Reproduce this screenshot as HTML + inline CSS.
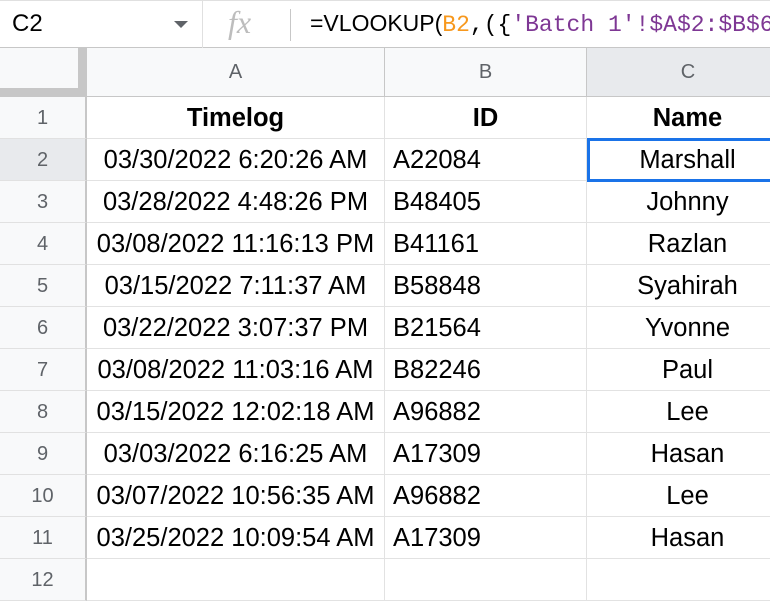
<!DOCTYPE html>
<html><head><style>
body{margin:0;width:770px;height:577px;overflow:hidden;background:#fff;font-family:"Liberation Sans",Arial,sans-serif;position:relative}
.top{position:absolute;left:0;top:0;width:770px;height:48px;border-top:1px solid #e0e0e0;border-bottom:1px solid #c7c7c7;box-sizing:border-box}
.abs{position:absolute}
.hdr{position:absolute;top:48px;height:49px;background:#f8f9fa;border-bottom:1px solid #c7c7c7;box-sizing:border-box;color:#5f6368;font-size:20px;text-align:center;line-height:48px}
.rn{position:absolute;left:0;width:87px;background:#f8f9fa;color:#5f6368;font-size:20px;text-align:center;border-bottom:1px solid #e1e1e1;border-right:2px solid #c7c7c7;box-sizing:border-box}
.cell{position:absolute;height:42px;line-height:42px;font-size:25.5px;color:#000;border-bottom:1px solid #e2e2e2;border-right:1px solid #e2e2e2;box-sizing:border-box;white-space:nowrap;overflow:hidden}
.m{font-family:"Liberation Mono",monospace;font-size:23px}
</style></head><body>
<div class="top">
<div class="abs" style="left:12px;top:9px;font-size:24px">C2</div>
<div class="abs" style="left:174px;top:20px;width:0;height:0;border-left:7px solid transparent;border-right:7px solid transparent;border-top:7px solid #5f6368"></div>
<div class="abs" style="left:202px;top:0;width:1px;height:47px;background:#e0e0e0"></div>
<div class="abs" style="left:228px;top:3px;font-family:'Liberation Serif',serif;font-style:italic;font-size:32px;color:#bdbdbd">fx</div>
<div class="abs" style="left:290px;top:8px;width:1px;height:32px;background:#c7c7c7"></div>
<div class="abs" style="left:310px;top:9px;font-size:23px;white-space:nowrap">=VLOOKUP(<span class="m"><span style="color:#f7981d">B2</span>,({<span style="color:#7e3794">'Batch 1'!$A$2:$B$6</span></span></div>
</div>
<div class="hdr" style="left:0;width:78px"></div>
<div class="abs" style="left:78px;top:48px;width:9px;height:49px;background:#c7c7c7"></div>
<div class="abs" style="left:0;top:88px;width:87px;height:9px;background:#c7c7c7"></div>
<div class="hdr" style="left:87px;width:298px;border-right:1px solid #c7c7c7">A</div>
<div class="hdr" style="left:385px;width:202px;border-right:1px solid #c7c7c7">B</div>
<div class="hdr" style="left:587px;width:202px;background:#e8eaed">C</div>
<div id="rows"></div>
<script>
var d=[["Timelog","ID","Name"],["03/30/2022 6:20:26 AM","A22084","Marshall"],["03/28/2022 4:48:26 PM","B48405","Johnny"],["03/08/2022 11:16:13 PM","B41161","Razlan"],["03/15/2022 7:11:37 AM","B58848","Syahirah"],["03/22/2022 3:07:37 PM","B21564","Yvonne"],["03/08/2022 11:03:16 AM","B82246","Paul"],["03/15/2022 12:02:18 AM","A96882","Lee"],["03/03/2022 6:16:25 AM","A17309","Hasan"],["03/07/2022 10:56:35 AM","A96882","Lee"],["03/25/2022 10:09:54 AM","A17309","Hasan"]];
var h="";
for(var i=0;i<12;i++){var t=97+i*42;
h+='<div class="rn" style="top:'+t+'px;height:42px;line-height:42px;'+(i==1?'background:#e8eaed;':'')+'">'+(i+1)+'</div>';
var r=d[i]||["","",""];var b=i==0?'font-weight:bold;':'';
h+='<div class="cell" style="left:87px;top:'+t+'px;width:298px;text-align:center;'+b+'">'+r[0]+'</div>';
h+='<div class="cell" style="left:385px;top:'+t+'px;width:202px;padding-left:8px;'+(i==0?'text-align:center;padding:0;':'')+b+'">'+r[1]+'</div>';
h+='<div class="cell" style="left:587px;top:'+t+'px;width:202px;text-align:center;'+b+'">'+r[2]+'</div>';}
h+='<div class="abs" style="left:587px;top:138px;width:204px;height:44px;border:3px solid #1a73e8;box-sizing:border-box"></div>';
document.getElementById('rows').innerHTML=h;
</script>
</body></html>
